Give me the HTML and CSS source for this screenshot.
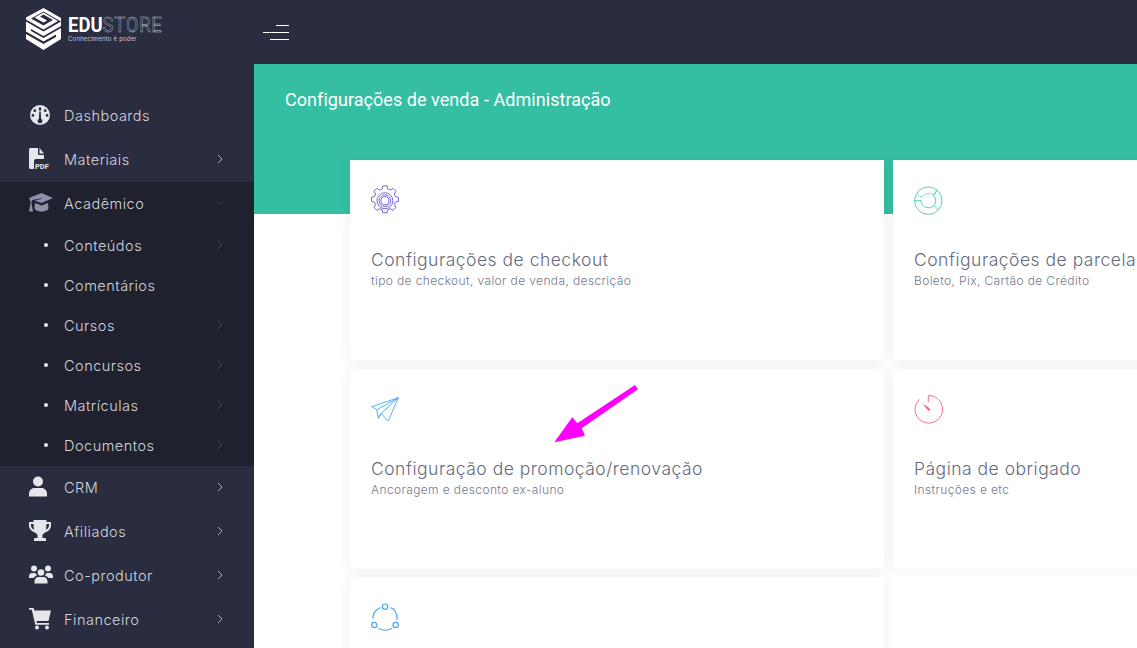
FILE: index.html
```html
<!DOCTYPE html>
<html lang="pt-BR">
<head>
  <meta charset="UTF-8">
  <meta name="viewport" content="width=device-width, initial-scale=1.0">
  <title>Configurações de venda - Administração</title>
  <link rel="stylesheet" href="styles.css">
</head>
<body>
  <header class="topbar">
    <div class="brand">
      <svg class="brand-mark" viewBox="0 0 37 42" width="37" height="42">
        <path fill="#fff" d="M18.500 0 36 10 36 13.500 18.500 3.500 6 10.500 18.500 17.500 28 12 18.500 6.500 15 8.500 22 12.500 18.500 14.500 9.500 9.500 18.500 4.500 33 13 18.500 21.500 1 11.500 1 9.500Z"/>
        <path fill="#fff" d="M1 13.500 18.500 23.500 36 13.500 36 18 18.500 28 6 21 6 23 18.500 30 36 20 36 31 18.500 42 1 31 1 26 18.500 36 31 29 31 26.500 18.500 33.500 1 23.500Z"/>
      </svg>
      <div class="brand-text">
        <div class="brand-name">EDU<span class="brand-outline">STORE</span></div>
        <div class="brand-tag">Conhecimento é poder</div>
      </div>
    </div>
    <button class="menu-toggle" aria-label="Menu"><span></span><span></span><span></span></button>
    <div class="topbar-fill"></div>
  </header>

  <div class="layout">
    <nav class="sidebar">
      <a class="nav-item">
        <svg class="nav-icon" viewBox="0 0 22 22"><path fill-rule="evenodd" d="M11 1a10 10 0 1 0 0 20 10 10 0 0 0 0-20ZM11 3.200a1.200 1.200 0 0 1 1.200 1.200v1a1.200 1.200 0 0 1-2.400 0v-1A1.200 1.200 0 0 1 11 3.200ZM5.800 5.300a1.400 1.400 0 1 1 0 2.800 1.400 1.400 0 0 1 0-2.800ZM16.200 5.300a1.400 1.400 0 1 1 0 2.800 1.400 1.400 0 0 1 0-2.800ZM3.900 10a1.400 1.400 0 1 1 0 2.800 1.400 1.400 0 0 1 0-2.800ZM18.100 10a1.400 1.400 0 1 1 0 2.800 1.400 1.400 0 0 1 0-2.800ZM10.300 7.500h1.400l.4 7.300a2.400 2.400 0 1 1-2.200 0Z"/></svg>
        <span class="nav-label">Dashboards</span>
      </a>
      <a class="nav-item">
        <svg class="nav-icon" viewBox="0 0 22 22"><path d="M0 1.500A1.500 1.500 0 0 1 1.500 0H9v5.500A1.500 1.500 0 0 0 10.500 7H15v4H7a2 2 0 0 0-2 2v8H1.500A1.500 1.500 0 0 1 0 19.500ZM10.500 0 15 5.500h-4.500Z"/><text x="6" y="20.500" class="pdf-text">PDF</text></svg>
        <span class="nav-label">Materiais</span>
        <svg class="chev" viewBox="0 0 8 10"><path d="M2 1l4 4-4 4"/></svg>
      </a>

      <div class="nav-group">
        <a class="nav-item nav-open">
          <svg class="nav-icon nav-icon-wide" viewBox="0 0 24 22"><path d="M12.500 1 24 6 12.500 11 5.500 8.500 12.500 7 12.300 6.300 3.800 8A2.500 2.500 0 0 0 2.500 10v1.800L4 19.500H0L1.500 11.500V9.500L0 6ZM6 11 12.500 13.500 19 11 19.500 16C19.500 18 16 19.500 12.500 19.500S5.800 18 5.500 16Z"/></svg>
          <span class="nav-label">Acadêmico</span>
          <svg class="chev" viewBox="0 0 10 8"><path d="M1 2l4 4 4-4"/></svg>
        </a>
        <ul class="subnav">
          <li><span class="dot"></span><span class="nav-label">Conteúdos</span><svg class="chev" viewBox="0 0 8 10"><path d="M2 1l4 4-4 4"/></svg></li>
          <li><span class="dot"></span><span class="nav-label">Comentários</span></li>
          <li><span class="dot"></span><span class="nav-label">Cursos</span><svg class="chev" viewBox="0 0 8 10"><path d="M2 1l4 4-4 4"/></svg></li>
          <li><span class="dot"></span><span class="nav-label">Concursos</span><svg class="chev" viewBox="0 0 8 10"><path d="M2 1l4 4-4 4"/></svg></li>
          <li><span class="dot"></span><span class="nav-label">Matrículas</span><svg class="chev" viewBox="0 0 8 10"><path d="M2 1l4 4-4 4"/></svg></li>
          <li><span class="dot"></span><span class="nav-label">Documentos</span><svg class="chev" viewBox="0 0 8 10"><path d="M2 1l4 4-4 4"/></svg></li>
        </ul>
      </div>

      <a class="nav-item">
        <svg class="nav-icon" viewBox="0 0 22 22"><circle cx="9" cy="5.500" r="5"/><path d="M0 20.500v-2.500C0 14.500 2.500 12 5.500 12h7c3 0 5.500 2.500 5.500 6v2.500Z"/></svg>
        <span class="nav-label">CRM</span>
        <svg class="chev" viewBox="0 0 8 10"><path d="M2 1l4 4-4 4"/></svg>
      </a>
      <a class="nav-item">
        <svg class="nav-icon" viewBox="0 0 22 22"><path fill-rule="evenodd" d="M4.500 0h13v2H22v3.500c0 3.500-3 6-5.800 6.800-.8 1.100-1.700 1.800-2.700 2.200V18H16a1 1 0 0 1 1 1V21H5v-2a1 1 0 0 1 1-1h2.500v-3.500c-1-.4-1.900-1.100-2.700-2.200C3 11.500 0 9 0 5.500V2h4.500ZM2 4v1.500c0 1.800 1.400 3.400 3.200 4.400-.4-1.500-.6-3.500-.7-5.900ZM20 4h-2.500c-.1 2.400-.3 4.400-.7 5.900C18.600 8.900 20 7.300 20 5.500Z"/></svg>
        <span class="nav-label">Afiliados</span>
        <svg class="chev" viewBox="0 0 8 10"><path d="M2 1l4 4-4 4"/></svg>
      </a>
      <a class="nav-item">
        <svg class="nav-icon nav-icon-wide" viewBox="0 0 24 22"><circle cx="5" cy="4.500" r="3"/><circle cx="19" cy="4.500" r="3"/><circle cx="12" cy="8.500" r="3.300"/><path d="M0 12.500c0-2 1.300-3.500 3-3.500h3.500c.3 1 1 1.900 1.700 2.500-1.700.4-3 1.300-3.700 2.500H0ZM24 12.500c0-2-1.300-3.500-3-3.500h-3.500c-.3 1-1 1.900-1.700 2.500 1.700.4 3 1.300 3.700 2.500H24ZM5.500 17.500c0-2.500 1.800-4.500 4-4.500h5c2.200 0 4 2 4 4.500V19.500h-13Z"/></svg>
        <span class="nav-label">Co-produtor</span>
        <svg class="chev" viewBox="0 0 8 10"><path d="M2 1l4 4-4 4"/></svg>
      </a>
      <a class="nav-item">
        <svg class="nav-icon nav-icon-wide" viewBox="0 0 24 22"><path d="M0 0h4.500l1 2.500H22l-2.500 10.500H7.500l.4 2H20v1.700H6.300L2.800 1.700H0Z"/><circle cx="8" cy="19.500" r="2"/><circle cx="18" cy="19.500" r="2"/></svg>
        <span class="nav-label">Financeiro</span>
        <svg class="chev" viewBox="0 0 8 10"><path d="M2 1l4 4-4 4"/></svg>
      </a>
    </nav>

    <main class="content">
      <div class="page-head">
        <h1>Configurações de venda - Administração</h1>
      </div>
      <div class="cards">
        <section class="card">
          <svg class="card-icon icon-purple" viewBox="0 0 30 30">
            <path d="M12 1.700h4l.6 2.900 2.500 1 2.500-1.600 2.800 2.800-1.600 2.500 1 2.500 2.900.6v4l-2.900.6-1 2.500 1.600 2.500-2.800 2.800-2.500-1.600-2.500 1-.6 2.900h-4l-.6-2.900-2.500-1-2.500 1.600-2.800-2.800 1.600-2.500-1-2.500-2.900-.6v-4l2.900-.6 1-2.500L3.600 6.800l2.800-2.800 2.500 1.600 2.500-1Z" stroke-linejoin="round"/>
            <circle cx="14" cy="15.700" r="7.500"/><circle cx="14" cy="15.700" r="5.500"/><circle cx="14" cy="15.700" r="3.800"/>
          </svg>
          <h2>Configurações de checkout</h2>
          <p>tipo de checkout, valor de venda, descrição</p>
        </section>
        <section class="card">
          <svg class="card-icon icon-green" viewBox="0 0 30 30">
            <circle cx="14.300" cy="15.700" r="13.700"/>
            <path d="M2.500 9.500 8 12.200A7.500 7.500 0 0 1 19.500 10.500L23 5" stroke-dasharray="1.400 .5"/>
            <path d="M23 5 19.500 10.500A7.500 7.500 0 0 1 20 20.500L24 24.500M7 15.700A7.500 7.500 0 0 0 20 20.500M7 15.700H.7"/>
          </svg>
          <h2>Configurações de parcelamento</h2>
          <p>Boleto, Pix, Cartão de Crédito</p>
        </section>
        <section class="card">
          <svg class="card-icon icon-blue" viewBox="0 0 30 30">
            <path d="M.7 12.700 27.300 3.700 17.300 27 10 19.500 7.300 24.300 5.800 15.800Z" stroke-linejoin="round"/>
            <path d="M27.300 3.700 5.800 15.800M27.300 3.700 10 19.500 7.300 24.300"/>
          </svg>
          <h2>Configuração de promoção/renovação</h2>
          <p>Ancoragem e desconto ex-aluno</p>
        </section>
        <section class="card">
          <svg class="card-icon icon-red" viewBox="0 0 30 30">
            <path d="M14.300 1.500a13.800 13.800 0 1 1-9 3.800M14.300 1.500v6.500"/>
            <path class="fill" d="M9 10 13.500 12.800 16.500 15.500 15 17 12.300 14.500Z"/>
          </svg>
          <h2>Página de obrigado</h2>
          <p>Instruções e etc</p>
        </section>
        <section class="card">
          <svg class="card-icon icon-blue icon-thick" viewBox="0 0 30 30">
            <circle cx="14" cy="4.700" r="2.700"/><circle cx="3.300" cy="23" r="2.700"/><circle cx="24.700" cy="23" r="2.700"/>
            <path d="M9.500 5.500C4.800 7.500 2 12 2 16.500M19.500 5.500C24 7.500 26.500 12 26 18M7.500 26.500c4 2.200 9 2.200 13.500 0"/>
          </svg>
        </section>
      </div>
      <svg class="arrow" viewBox="0 0 85 58" width="85" height="58"><path fill="#ff00ff" d="M.3 57.300 18.300 32.300 23.300 38.300 81 0 84 4.300 27.700 43.300 31 50.700Z"/></svg>
    </main>
  </div>
</body>
</html>
```

FILE: styles.css
```css
* {
  box-sizing: border-box;
}
html, body {
  height: 100%;
}
body {
  margin: 0;
  overflow: hidden;
  font-family: 'Inter', 'Open Sans', sans-serif;
  background: #fff;
  color: #74788d;
}
.topbar {
  display: flex;
  align-items: center;
  height: 64px;
  background: #2a2c3f;
}
.brand {
  display: flex;
  align-items: center;
  gap: 6px;
  width: 254px;
  padding: 0 0 6px 25px;
  flex-shrink: 0;
}
.brand-name {
  font-family: 'Roboto', sans-serif;
  font-size: 21px;
  font-weight: 700;
  line-height: 20px;
  color: #fff;
  transform: scaleX(0.88);
  transform-origin: left center;
}
.brand-outline {
  color: transparent;
  font-weight: 400;
  letter-spacing: 0.8px;
  -webkit-text-stroke: 0.4px #c6c7cf;
}
.brand-tag {
  font-size: 6px;
  line-height: 8px;
  letter-spacing: 0.2px;
  color: #c9cad2;
}
.menu-toggle {
  display: flex;
  flex-direction: column;
  align-items: flex-end;
  gap: 6px;
  width: 26px;
  margin-left: 9px;
  padding: 0;
  border: 0;
  background: none;
}
.menu-toggle span {
  display: block;
  height: 1px;
  width: 19px;
  background: #fff;
}
.menu-toggle span:nth-child(1) {
  width: 13px;
}
.menu-toggle span:nth-child(2) {
  width: 26px;
}
.topbar-fill {
  flex: 1;
  height: 100%;
  margin-left: 3px;
  border-left: 1px solid #2d2f42;
}
.layout {
  display: flex;
  height: calc(100vh - 64px);
}
.sidebar {
  width: 254px;
  flex-shrink: 0;
  padding-top: 30px;
  background: #2a2c3f;
}
.nav-item {
  display: flex;
  align-items: center;
  height: 44px;
  padding: 0 0 2px 29px;
  color: #d5d6dc;
}
.nav-icon {
  width: 22px;
  height: 22px;
  margin-right: 13px;
  fill: #e6e7ea;
  flex-shrink: 0;
}
.nav-icon-wide {
  width: 24px;
  margin-right: 11px;
}
.pdf-text {
  font-family: 'Roboto', sans-serif;
  font-size: 7.500px;
  font-weight: 700;
}
.nav-label {
  font-size: 14.500px;
  font-weight: 300;
  letter-spacing: 0.5px;
}
.chev {
  width: 8px;
  height: 10px;
  margin-left: auto;
  margin-right: 30px;
  fill: none;
  stroke: #a6a8b5;
  stroke-width: 1;
}
.nav-group {
  background: #20212f;
}
.nav-open .nav-icon {
  fill: #8d90a6;
}
.nav-open .chev {
  stroke: #4d4f62;
}
.subnav {
  margin: 0;
  padding: 0;
  list-style: none;
}
.subnav li {
  display: flex;
  align-items: center;
  height: 40px;
  padding: 0 0 2px 44px;
  color: #d5d6dc;
}
.subnav .chev {
  stroke: #43455a;
}
.dot {
  width: 4px;
  height: 4px;
  margin-right: 16px;
  border-radius: 50%;
  background: #e6e7ea;
}
.content {
  position: relative;
  flex: 1;
  min-width: 0;
}
.page-head {
  height: 150px;
  padding: 24px 31px;
  background: #35bfa2;
}
.page-head h1 {
  margin: 0;
  font-family: 'Roboto', sans-serif;
  font-size: 18px;
  font-weight: 400;
  line-height: 24px;
  letter-spacing: 0.05px;
  color: #fff;
}
.cards {
  display: grid;
  grid-template-columns: 534px 534px;
  grid-auto-rows: 200px;
  gap: 8.500px 9px;
  margin: -54px 0 0 96px;
}
.card {
  padding: 25px 21px;
  background: #fff;
  box-shadow: 0 0 12px rgba(60, 60, 80, 0.08);
}
.card-icon {
  display: block;
  width: 30px;
  height: 30px;
  fill: none;
  stroke-width: 0.900;
}
.icon-purple {
  transform: scale(1.06);
}
.icon-thick {
  stroke-width: 1.200;
}
.icon-purple {
  stroke: #6f62dc;
}
.icon-green {
  stroke: #4cc9ac;
}
.icon-blue {
  stroke: #4aa5f5;
}
.icon-red {
  stroke: #f9617c;
}
.icon-red .fill {
  fill: #f9617c;
  stroke: none;
}
.card h2 {
  margin: 33px 0 0;
  font-size: 17.500px;
  font-weight: 300;
  line-height: 24px;
  letter-spacing: 0.5px;
  white-space: nowrap;
  color: #666a7e;
}
.card p {
  margin: 0;
  font-size: 12px;
  font-weight: 300;
  line-height: 18px;
  letter-spacing: 0.38px;
  color: #74788d;
}
.arrow {
  position: absolute;
  left: 300px;
  top: 321px;
}
```
